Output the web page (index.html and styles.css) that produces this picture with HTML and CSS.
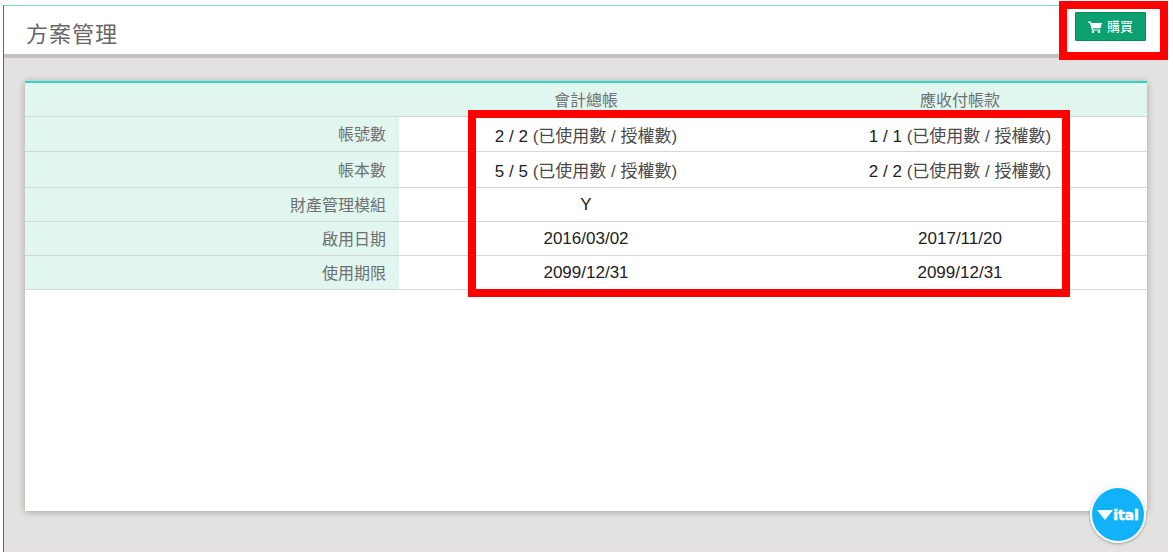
FILE: index.html
```html
<!DOCTYPE html>
<html lang="zh-Hant">
<head>
<meta charset="utf-8">
<title>方案管理</title>
<link rel="stylesheet" href="styles.css">
</head>
<body>
<div class="frame">
  <header class="topbar">
    <h1 class="title">方案管理</h1>
    <button class="buy" type="button">
      <svg class="cart" viewBox="0 0 14 12" width="14" height="12"><path d="M0 .6h2.8l.5 1.5H14l-1.6 5.2H4.6l.3 1.1h7.3v1.1H3.9L2 1.7H0z" fill="#fff"/><circle cx="5" cy="10.8" r="1.2" fill="#fff"/><circle cx="11" cy="10.8" r="1.2" fill="#fff"/></svg>
      <span>購買</span>
    </button>
  </header>
  <main class="content">
    <section class="card">
      <div class="row head"><div class="cell label"></div><div class="cell title-cell">會計總帳</div><div class="cell title-cell">應收付帳款</div></div>
      <div class="row r1"><div class="cell label">帳號數</div><div class="cell val"><div>2 / 2 <span class="note">(已使用數 / 授權數)</span></div></div><div class="cell val"><div>1 / 1 <span class="note">(已使用數 / 授權數)</span></div></div></div>
      <div class="row r2"><div class="cell label">帳本數</div><div class="cell val"><div>5 / 5 <span class="note">(已使用數 / 授權數)</span></div></div><div class="cell val"><div>2 / 2 <span class="note">(已使用數 / 授權數)</span></div></div></div>
      <div class="row r3"><div class="cell label">財產管理模組</div><div class="cell val">Y</div><div class="cell val"></div></div>
      <div class="row r4"><div class="cell label">啟用日期</div><div class="cell val">2016/03/02</div><div class="cell val">2017/11/20</div></div>
      <div class="row r4"><div class="cell label">使用期限</div><div class="cell val">2099/12/31</div><div class="cell val">2099/12/31</div></div>
    </section>
  </main>
</div>
<div class="mark mark-table"></div>
<div class="mark mark-buy"></div>
<div class="vital"><svg class="vital-v" viewBox="0 0 16 10" width="16" height="10"><path d="M0 0h16L8 10z" fill="#fff"/></svg><span class="vital-text">ital</span></div>
</body>
</html>
```
FILE: styles.css
```css
* { box-sizing: border-box; }
html, body { margin: 0; height: 100%; background: #fff; overflow: hidden; }
body { padding: 5px 5px 3px 3px; font-family: "Liberation Sans", "Noto Sans CJK TC", sans-serif; }
.frame { width: 1165px; height: 547px; display: flex; flex-direction: column; border-left: 1px solid #666; background: #e3e2e1; }
.topbar { height: 53px; flex: none; display: flex; justify-content: space-between; align-items: flex-start; background: #fff; border-top: 1px solid #7fd9cf; border-bottom: 4px solid #c2c2c1; }
.title { margin: 16px 0 0 22px; font-size: 22px; line-height: 26px; font-weight: 400; letter-spacing: 1px; color: #666; }
.buy { margin: 6px 22px 0 0; width: 71px; height: 29px; display: flex; align-items: center; justify-content: center; gap: 5px; padding: 0; border: 1px solid #0b8a62; border-radius: 1px; background: #0ca170; color: #fff; font: 13px/1 "Liberation Sans", "Noto Sans CJK TC", sans-serif; }
.cart { flex: none; }
.content { flex: 1; padding: 23px 21px 41px 21px; }
.card { height: 430px; background: #fff; border-top: 2px solid #2fd6c3; box-shadow: 0 1px 7px rgba(0,0,0,.28); }
.row { display: grid; grid-template-columns: repeat(3, 374px); border-bottom: 1px solid #d6d6d6; height: 34px; }
.head { height: 34px; background: #e0f6ef; }
.r1 { height: 35px; }
.r2 { height: 36px; }
.r3, .r4 { height: 34px; }
.cell { display: flex; align-items: center; justify-content: center; font-size: 16px; color: #707070; }
.title-cell { padding-bottom: 2px; }
.val { font-size: 17px; color: #222; }
.note { color: #4a4a4a; }
.label { justify-content: flex-end; padding: 0 13px 2px 0; background: #e0f6ef; }
.mark { position: absolute; border: 8px solid #f00; }
.mark-table { left: 468px; top: 110px; width: 602px; height: 187px; }
.mark-buy { left: 1059px; top: 1px; width: 109px; height: 59px; }
.vital { position: absolute; left: 1090px; top: 486px; width: 56px; height: 57px; border-radius: 50%; background: #12b2fb; border: 2px solid #fff; box-shadow: 0 1px 3px rgba(0,0,0,.3); display: flex; align-items: center; justify-content: center; color: #fff; }
.vital-v { flex: none; margin-top: 1px; }
.vital-text { font: 700 14px/1 "DejaVu Sans", sans-serif; letter-spacing: 0; -webkit-text-stroke: .5px #fff; }
```
